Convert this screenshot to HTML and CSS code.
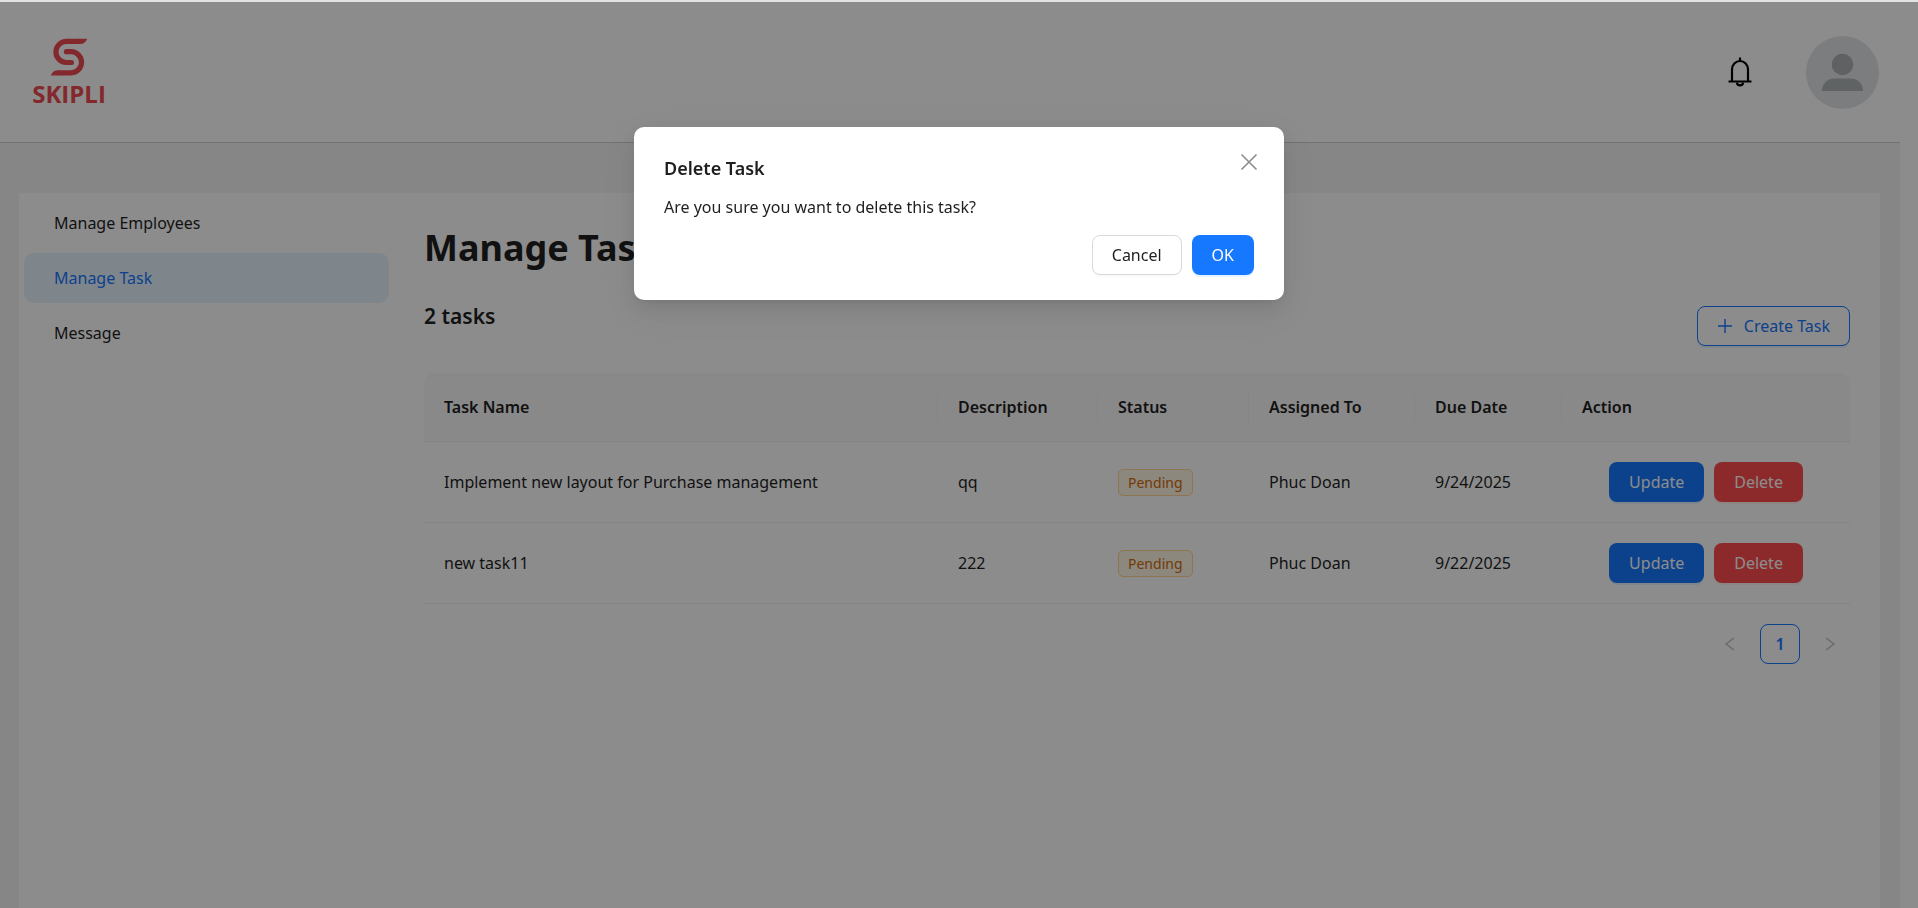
FILE: index.html
```html
<!DOCTYPE html>
<html lang="en">
<head>
<meta charset="utf-8">
<meta name="viewport" content="width=device-width, initial-scale=1">
<title>Manage Task</title>
<link rel="stylesheet" href="styles.css">
</head>
<body>
<div class="app">
  <header class="header">
    <a class="logo" href="#" aria-label="Skipli">
      <svg width="100" height="100" viewBox="0 0 100 100">
        <g fill="none" stroke="#ee4b52" stroke-width="5.2">
          <path d="M61 19.4H47.5a10.55 10.55 0 0 0 0 21.1H52.4"/>
          <path d="M47.4 29.7H52a10.55 10.55 0 0 1 0 21.1H39"/>
        </g>
        <g fill="#ee4b52">
          <circle cx="52.4" cy="40.5" r="2.6"/>
          <circle cx="47.4" cy="29.7" r="2.6"/>
          <path d="M60 16.8h8.2q-2 5.2-7.2 5.2h-1z"/>
          <path d="M40 53.4h-8.2q2-5.2 7.2-5.2h1z"/>
          <text class="logo-text" x="50" y="81" text-anchor="middle">SKIPLI</text>
        </g>
      </svg>
    </a>
    <div class="header-tools">
      <button class="bell" type="button" aria-label="Notifications">
        <svg width="30" height="30" viewBox="0 0 30 30" fill="none" stroke="#000" stroke-width="2.2">
          <path d="M15 .5v3M7 24.500V12.500a8 8.500 0 0 1 16 0v12M3.500 24.500h23"/>
          <path d="M12 25.500a3 2.800 0 0 0 6 0"/>
        </svg>
      </button>
      <a class="avatar" href="#" aria-label="Profile">
        <svg width="73" height="73" viewBox="0 0 73 73">
          <circle cx="36.500" cy="36.500" r="36.500" fill="#e1e4e7"/>
          <circle cx="36.500" cy="28.500" r="10.700" fill="#afb1b3"/>
          <path d="M16 55a12 12 0 0 1 12-12.500h17a12 12 0 0 1 12 12.500z" fill="#adb5b6"/>
        </svg>
      </a>
    </div>
  </header>
  <div class="layout">
    <div class="panel">
      <nav class="menu">
        <a class="menu-item" href="#">Manage Employees</a>
        <a class="menu-item menu-item-selected" href="#">Manage Task</a>
        <a class="menu-item" href="#">Message</a>
      </nav>
      <main class="content">
        <h1 class="title">Manage Tasks</h1>
        <div class="toolbar">
          <h2 class="count">2 tasks</h2>
          <button class="btn btn-outline" type="button">
            <svg width="16" height="16" viewBox="0 0 16 16" stroke="currentColor" stroke-width="1.4"><path d="M8 1v14M1 8h14"/></svg>
            <span>Create Task</span>
          </button>
        </div>
        <table class="table">
          <colgroup>
            <col><col class="col-description"><col class="col-status"><col class="col-assigned"><col class="col-due"><col class="col-action">
          </colgroup>
          <thead>
            <tr><th>Task Name</th><th>Description</th><th>Status</th><th>Assigned To</th><th>Due Date</th><th>Action</th></tr>
          </thead>
          <tbody>
            <tr>
              <td>Implement new layout for Purchase management</td><td>qq</td>
              <td><span class="tag">Pending</span></td>
              <td>Phuc Doan</td><td>9/24/2025</td>
              <td><div class="actions"><button class="btn btn-primary" type="button">Update</button><button class="btn btn-danger" type="button">Delete</button></div></td>
            </tr>
            <tr>
              <td>new task11</td><td>222</td>
              <td><span class="tag">Pending</span></td>
              <td>Phuc Doan</td><td>9/22/2025</td>
              <td><div class="actions"><button class="btn btn-primary" type="button">Update</button><button class="btn btn-danger" type="button">Delete</button></div></td>
            </tr>
          </tbody>
        </table>
        <nav class="pagination" aria-label="Pages">
          <button class="page" type="button" aria-label="Previous page" disabled>
            <svg width="14" height="14" viewBox="0 0 14 14" fill="none" stroke="currentColor" stroke-width="1.300"><path d="M11 1L3 7l8 6"/></svg>
          </button>
          <button class="page page-active" type="button">1</button>
          <button class="page" type="button" aria-label="Next page" disabled>
            <svg width="14" height="14" viewBox="0 0 14 14" fill="none" stroke="currentColor" stroke-width="1.300"><path d="M3 1l8 6-8 6"/></svg>
          </button>
        </nav>
      </main>
    </div>
  </div>
</div>
<div class="mask">
  <section class="modal" role="dialog" aria-modal="true" aria-labelledby="modal-title">
    <button class="modal-close" type="button" aria-label="Close">
      <svg width="18" height="18" viewBox="0 0 18 18" stroke="currentColor" stroke-width="1.600"><path d="M1.500 1.500l15 15M16.500 1.500l-15 15"/></svg>
    </button>
    <h2 class="modal-title" id="modal-title">Delete Task</h2>
    <p class="modal-text">Are you sure you want to delete this task?</p>
    <footer class="modal-footer">
      <button class="btn btn-default" type="button">Cancel</button>
      <button class="btn btn-primary" type="button">OK</button>
    </footer>
  </section>
</div>
</body>
</html>
```
FILE: styles.css
```css
* {
  box-sizing: border-box;
}

body {
  margin: 0;
  height: 100vh;
  overflow: hidden;
  border-top: 2px solid #e3e3e3;
  background: #fff;
  color: #1f1f1f;
  font-family: "Segoe UI", "Noto Sans", "Open Sans", sans-serif;
  font-size: 16px;
  line-height: 28px;
}

.app {
  display: flex;
  flex-direction: column;
  height: 100%;
  margin-right: 18px;
}

.header {
  display: flex;
  align-items: center;
  justify-content: space-between;
  padding: 20px 21px 20px 19px;
  border-bottom: 1px solid #cfcfcf;
}

.logo,
.avatar,
.logo svg,
.avatar svg,
.btn svg,
.bell svg,
.page svg,
.modal-close svg {
  display: block;
}

.logo-text {
  font-family: "Open Sans", "Noto Sans", sans-serif;
  font-size: 24px;
  font-weight: 700;
}

.header-tools {
  display: flex;
  align-items: center;
  gap: 51px;
}

.bell {
  padding: 0;
  border: 0;
  background: none;
}

.layout {
  flex: 1;
  display: flex;
  padding: 50px 20px 0 19px;
  background: #f5f5f5;
}

.panel {
  flex: 1;
  display: flex;
  background: #fff;
}

.menu {
  flex: none;
  display: flex;
  flex-direction: column;
  gap: 5px;
  width: 375px;
  padding: 5px;
}

.menu-item {
  padding: 0 30px;
  border-radius: 10px;
  color: #1f1f1f;
  line-height: 50px;
  text-decoration: none;
}

.menu-item-selected {
  background: #e6f4ff;
  color: #1677ff;
}

.content {
  flex: 1;
  padding: 29px 30px;
}

.title {
  margin: 0 0 30px;
  font-size: 36px;
  font-weight: 700;
  line-height: 52px;
}

.toolbar {
  display: flex;
  align-items: flex-start;
  justify-content: space-between;
  margin-bottom: 27px;
}

.count {
  margin: 0;
  font-size: 21px;
  font-weight: 600;
  line-height: 24px;
}

.toolbar .btn {
  margin-top: 2px;
}

.btn {
  display: flex;
  align-items: center;
  justify-content: center;
  gap: 11px;
  height: 40px;
  padding: 0 19px;
  border: 1px solid transparent;
  border-radius: 8px;
  font: inherit;
}

.btn-default {
  border-color: #d9d9d9;
  background: #fff;
  color: #1f1f1f;
  box-shadow: 0 2px 0 rgba(0, 0, 0, 0.02);
}

.btn-outline {
  border-color: #1677ff;
  background: #fff;
  color: #1677ff;
  box-shadow: 0 2px 0 rgba(5, 145, 255, 0.1);
}

.btn-primary {
  background: #1677ff;
  color: #fff;
  box-shadow: 0 2px 0 rgba(5, 145, 255, 0.1);
}

.btn-danger {
  background: #ff4d4f;
  color: #fff;
  box-shadow: 0 2px 0 rgba(255, 38, 5, 0.06);
}

.table {
  width: 100%;
  border-spacing: 0;
  table-layout: fixed;
}

.col-description {
  width: 160px;
}

.col-status {
  width: 151px;
}

.col-assigned {
  width: 166px;
}

.col-due {
  width: 147px;
}

.col-action {
  width: 288px;
}

.table th,
.table td {
  padding: 20px;
  border-bottom: 1px solid #f0f0f0;
  text-align: left;
}

.table th {
  position: relative;
  background: #fafafa;
  font-weight: 600;
}

.table th:first-child {
  border-top-left-radius: 10px;
}

.table th:last-child {
  border-top-right-radius: 10px;
}

.table th:not(:last-child)::after {
  content: "";
  position: absolute;
  top: 20px;
  right: 0;
  width: 1px;
  height: 28px;
  background: #f0f0f0;
}

.tag {
  display: block;
  width: fit-content;
  padding: 0 9px;
  border: 1px solid #ffd591;
  border-radius: 5px;
  background: #fff7e6;
  color: #d46b08;
  font-size: 14px;
  line-height: 25px;
}

.actions {
  display: flex;
  justify-content: center;
  gap: 10px;
}

.pagination {
  display: flex;
  justify-content: flex-end;
  gap: 10px;
  margin-top: 20px;
}

.page {
  display: flex;
  align-items: center;
  justify-content: center;
  width: 40px;
  height: 40px;
  padding: 0;
  border: 1px solid transparent;
  border-radius: 8px;
  background: none;
  color: #bfbfbf;
  font: inherit;
}

.page-active {
  border-color: #1677ff;
  color: #1677ff;
  font-weight: 600;
}

.mask {
  position: fixed;
  inset: 2px 0 0;
  padding-top: 125px;
  background: rgba(0, 0, 0, 0.45);
}

.modal {
  position: relative;
  width: 650px;
  margin: 0 auto;
  padding: 26px 30px 25px;
  border-radius: 10px;
  background: #fff;
  box-shadow: 0 8px 20px rgba(0, 0, 0, 0.08), 0 4px 8px -5px rgba(0, 0, 0, 0.12), 0 11px 35px 10px rgba(0, 0, 0, 0.05);
}

.modal-close {
  position: absolute;
  top: 26px;
  right: 26px;
  padding: 0;
  border: 0;
  background: none;
  color: #8c8c8c;
}

.modal-title {
  margin: 0 0 10px;
  font-size: 18px;
  font-weight: 600;
  line-height: 30px;
}

.modal-text {
  margin: 0;
}

.modal-footer {
  display: flex;
  justify-content: flex-end;
  gap: 10px;
  margin-top: 14px;
}
```
